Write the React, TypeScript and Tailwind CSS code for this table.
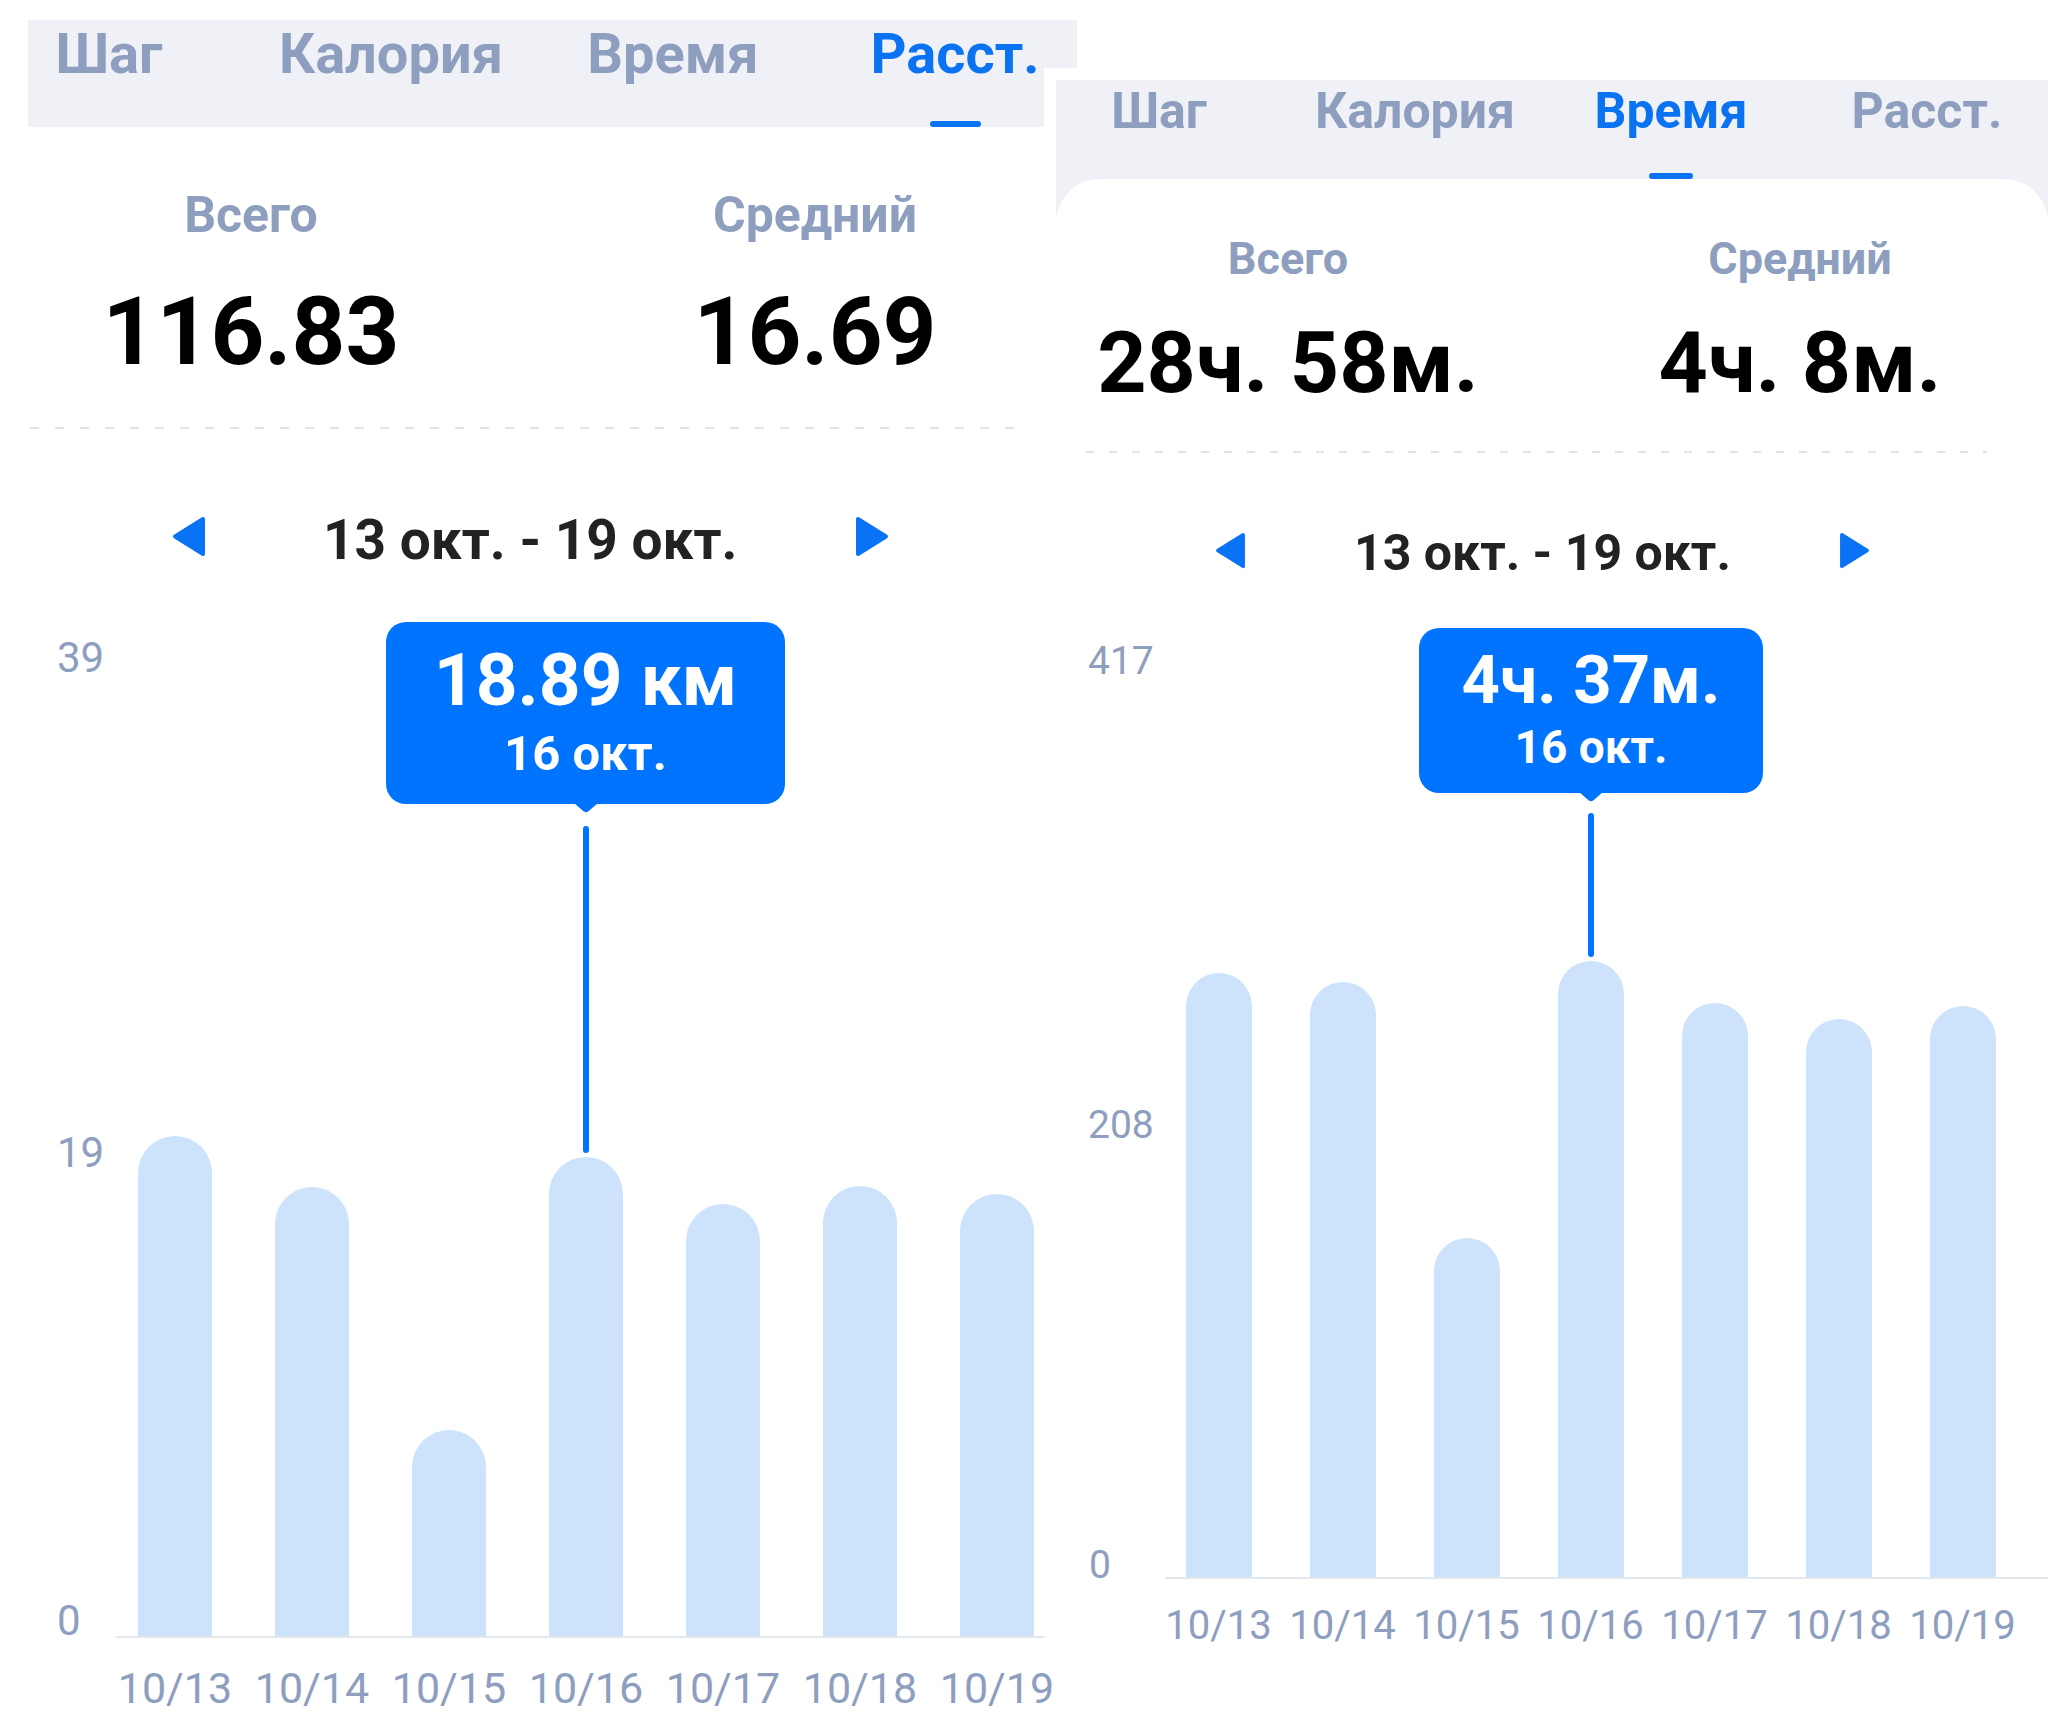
import React from 'react'

const TABS = ['Шаг', 'Калория', 'Время', 'Расст.']
const DAYS = ['10/13', '10/14', '10/15', '10/16', '10/17', '10/18', '10/19']

// bar heights in px, measured against the plot baseline
const distBars = [500, 449, 206, 479, 432, 450, 442]
const timeBars = [604, 595, 339, 616, 574, 558, 571]

const GRAY = 'text-[#8d9ebe]'
const BLUE = 'text-[#0b73f2]'

function ArrowLeft({ className }: { className: string }) {
  return (
    <svg viewBox="0 0 34 41" className={className}>
      <polygon points="31,3 3,20.5 31,38" fill="#0a73f5" stroke="#0a73f5" strokeWidth="4" strokeLinejoin="round" />
    </svg>
  )
}

function ArrowRight({ className }: { className: string }) {
  return (
    <svg viewBox="0 0 34 41" className={className}>
      <polygon points="3,3 31,20.5 3,38" fill="#0a73f5" stroke="#0a73f5" strokeWidth="4" strokeLinejoin="round" />
    </svg>
  )
}

function Pointer() {
  return (
    <svg
      viewBox="0 0 24 10"
      className="absolute top-full left-1/2 -translate-x-1/2 -mt-px w-[24px] h-[10px]"
    >
      <path d="M0 0 H24 L14.2 8.4 Q12 10 9.8 8.4 Z" fill="#0073ff" />
    </svg>
  )
}

function DistancePanel() {
  return (
    <div className="mt-[20px] ml-[28px] w-[1049px] shrink-0">
      <div className="h-[107px] bg-[#eff1f6] overflow-hidden">
        <div className="flex h-full -ml-[60px]">
          {TABS.map((t, i) => (
            <div key={t} className="w-[282px] shrink-0 flex flex-col items-center h-full pt-[6px]">
              <span className={`text-[56px] leading-none font-bold ${i === 3 ? BLUE : GRAY}`}>{t}</span>
              {i === 3 && <span className="mt-auto w-[51px] h-[6px] rounded-full bg-[#0b73f2]" />}
            </div>
          ))}
        </div>
      </div>

      <div className="flex pl-[23px] gap-[164px] mt-[63px]">
        {[
          ['Всего', '116.83'],
          ['Средний', '16.69'],
        ].map(([label, value]) => (
          <div key={label} className="w-[400px] flex flex-col items-center">
            <span className={`text-[50px] leading-none font-bold ${GRAY}`}>{label}</span>
            <span className="mt-[45px] text-[94px] leading-none font-bold text-black">{value}</span>
          </div>
        ))}
      </div>

      <div className="mt-[48px] ml-[2px] w-[990px] h-[2px] bg-[repeating-linear-gradient(90deg,#dfe4ec_0_9px,transparent_9px_25px)]" />

      <div className="mt-[84px] flex items-center pl-[144px] gap-[117px]">
        <ArrowLeft className="w-[34px] h-[41px] mb-[8px]" />
        <span className="text-[55px] leading-none font-bold text-[#222]">13 окт. - 19 окт.</span>
        <ArrowRight className="w-[34px] h-[41px] mb-[8px]" />
      </div>

      <div className="relative h-[1068px]">
        <span className={`absolute left-[29px] top-[69px] text-[42px] leading-none ${GRAY}`}>39</span>
        <span className={`absolute left-[29px] top-[564px] text-[42px] leading-none ${GRAY}`}>19</span>
        <span className={`absolute left-[29px] top-[1032px] text-[42px] leading-none ${GRAY}`}>0</span>

        <div className="absolute inset-y-0 left-[78.5px] flex items-end">
          {distBars.map((h, i) => (
            <div key={i} className="w-[137px] flex justify-center">
              <div className="w-[74px] rounded-t-full bg-[#cde3fc]" style={{ height: h }} />
            </div>
          ))}
        </div>

        <div className="absolute left-[555px] top-[258px] w-[6px] h-[327px] rounded-full bg-[#0073ff]" />

        <div className="absolute left-[358px] top-[54px] w-[399px] h-[182px] rounded-[20px] bg-[#0073ff] text-white flex flex-col items-center pt-[22px]">
          <span className="text-[73px] leading-none font-bold">18.89 км</span>
          <span className="mt-[12px] text-[49px] leading-none font-bold">16 окт.</span>
          <Pointer />
        </div>
      </div>

      <div className="ml-[88px] w-[928px] h-[2px] bg-[#e3e8ef]" />

      <div className="flex ml-[78.5px] mt-[29px]">
        {DAYS.map(d => (
          <span key={d} className={`w-[137px] shrink-0 text-center text-[43px] leading-none ${GRAY}`}>{d}</span>
        ))}
      </div>
    </div>
  )
}

function TimePanel() {
  return (
    <div className="mt-[80px] -ml-[21px] flex-1 min-w-0">
      <div className="bg-[#eff1f6] shadow-[-12px_-12px_0_0_#ffffff] pb-[44px] overflow-hidden">
        <div className="flex h-[99px] -ml-[25px]">
          {TABS.map((t, i) => (
            <div key={t} className="w-[256px] shrink-0 flex flex-col items-center h-full pt-[6px]">
              <span className={`text-[50px] leading-none font-bold ${i === 2 ? BLUE : GRAY}`}>{t}</span>
              {i === 2 && <span className="mt-auto w-[44px] h-[6px] rounded-full bg-[#0b73f2]" />}
            </div>
          ))}
        </div>
      </div>

      <div className="-mt-[44px] bg-white rounded-t-[44px] pt-[57px]">
        <div className="flex pl-[32px] gap-[112px]">
          {[
            ['Всего', '28ч. 58м.'],
            ['Средний', '4ч. 8м.'],
          ].map(([label, value]) => (
            <div key={label} className="w-[400px] flex flex-col items-center">
              <span className={`text-[45px] leading-none font-bold ${GRAY}`}>{label}</span>
              <span className="mt-[39px] text-[86px] leading-none font-bold text-black">{value}</span>
            </div>
          ))}
        </div>

        <div className="mt-[45px] ml-[30px] w-[901px] h-[2px] bg-[repeating-linear-gradient(90deg,#dfe4ec_0_8px,transparent_8px_23px)]" />

        <div className="mt-[75px] flex items-center pl-[159px] gap-[108px]">
          <ArrowLeft className="w-[31px] h-[37px] mb-[5px]" />
          <span className="text-[50px] leading-none font-bold text-[#222]">13 окт. - 19 окт.</span>
          <ArrowRight className="w-[31px] h-[37px] mb-[5px]" />
        </div>

        <div className="relative h-[999px]">
          <span className={`absolute left-[32px] top-[64px] text-[39px] leading-none ${GRAY}`}>417</span>
          <span className={`absolute left-[32px] top-[528px] text-[39px] leading-none ${GRAY}`}>208</span>
          <span className={`absolute left-[33px] top-[968px] text-[39px] leading-none ${GRAY}`}>0</span>

          <div className="absolute inset-y-0 left-[100.5px] flex items-end">
            {timeBars.map((h, i) => (
              <div key={i} className="w-[124px] flex justify-center">
                <div className="w-[66px] rounded-t-full bg-[#cde3fc]" style={{ height: h }} />
              </div>
            ))}
          </div>

          <div className="absolute left-[532px] top-[235px] w-[6px] h-[144px] rounded-full bg-[#0073ff]" />

          <div className="absolute left-[363px] top-[50px] w-[344px] h-[165px] rounded-[20px] bg-[#0073ff] text-white flex flex-col items-center pt-[19px]">
            <span className="text-[67px] leading-none font-bold">4ч. 37м.</span>
            <span className="mt-[10px] text-[46px] leading-none font-bold">16 окт.</span>
            <Pointer />
          </div>
        </div>

        <div className="ml-[109px] h-[2px] bg-[#e3e8ef]" />

        <div className="flex ml-[100.5px] mt-[27px]">
          {DAYS.map(d => (
            <span key={d} className={`w-[124px] shrink-0 text-center text-[40px] leading-none ${GRAY}`}>{d}</span>
          ))}
        </div>
      </div>
    </div>
  )
}

export default function App() {
  return (
    <div className="w-[2048px] h-[1736px] bg-white flex items-start overflow-hidden font-['Roboto',sans-serif]">
      <DistancePanel />
      <TimePanel />
    </div>
  )
}
